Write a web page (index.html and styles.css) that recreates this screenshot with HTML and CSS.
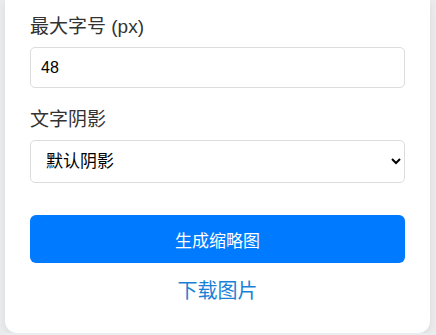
FILE: index.html
```html
<!DOCTYPE html>
<html lang="zh-CN">
<head>
<meta charset="utf-8">
<title>缩略图生成</title>
<link rel="stylesheet" href="styles.css">
</head>
<body>
<div class="card">
  <div class="group">
    <label class="label" for="maxsize">最大字号 (px)</label>
    <input class="field" id="maxsize" type="text" value="48">
  </div>
  <div class="group">
    <label class="label" for="shadow">文字阴影</label>
    <select class="field select" id="shadow">
      <option>默认阴影</option>
      <option>无阴影</option>
    </select>
  </div>
  <button class="btn" type="button">生成缩略图</button>
  <a class="download" href="#">下载图片</a>
</div>
</body>
</html>
```

FILE: styles.css
```css
html, body {
  margin: 0;
  padding: 0;
}
body {
  background: #ebecee;
  font-family: "Liberation Sans", "Noto Sans CJK SC", sans-serif;
  color: #333;
}
.card {
  width: 425px;
  margin: 0 0 0 5px;
  box-sizing: border-box;
  background: #fff;
  border-radius: 0 0 12px 12px;
  box-shadow: 0 2px 8px rgba(0, 0, 0, 0.08);
  padding: 14px 25px 28px;
}
.group {
  margin-bottom: 19px;
}
.label {
  display: block;
  font-size: 19px;
  line-height: 26px;
  color: #333;
  margin-bottom: 7px;
}
.field {
  display: block;
  width: 100%;
  box-sizing: border-box;
  height: 41px;
  border: 1px solid #dcdcdc;
  border-radius: 5px;
  padding: 0 10px;
  font-family: "Liberation Sans", "Noto Sans CJK SC", sans-serif;
  font-size: 16px;
  color: #000;
  background: #fff;
  outline: none;
}
.select {
  height: 43px;
  font-size: 17px;
  padding: 0 11px;
}
.btn {
  display: block;
  width: 100%;
  height: 48px;
  margin-top: 32px;
  border: none;
  border-radius: 6px;
  background: #007bff;
  color: #fff;
  font-family: "Liberation Sans", "Noto Sans CJK SC", sans-serif;
  font-size: 17px;
}
.download {
  display: block;
  text-align: center;
  margin-top: 14px;
  font-size: 20px;
  line-height: 28px;
  color: #1a7fd6;
  text-decoration: none;
}
```
